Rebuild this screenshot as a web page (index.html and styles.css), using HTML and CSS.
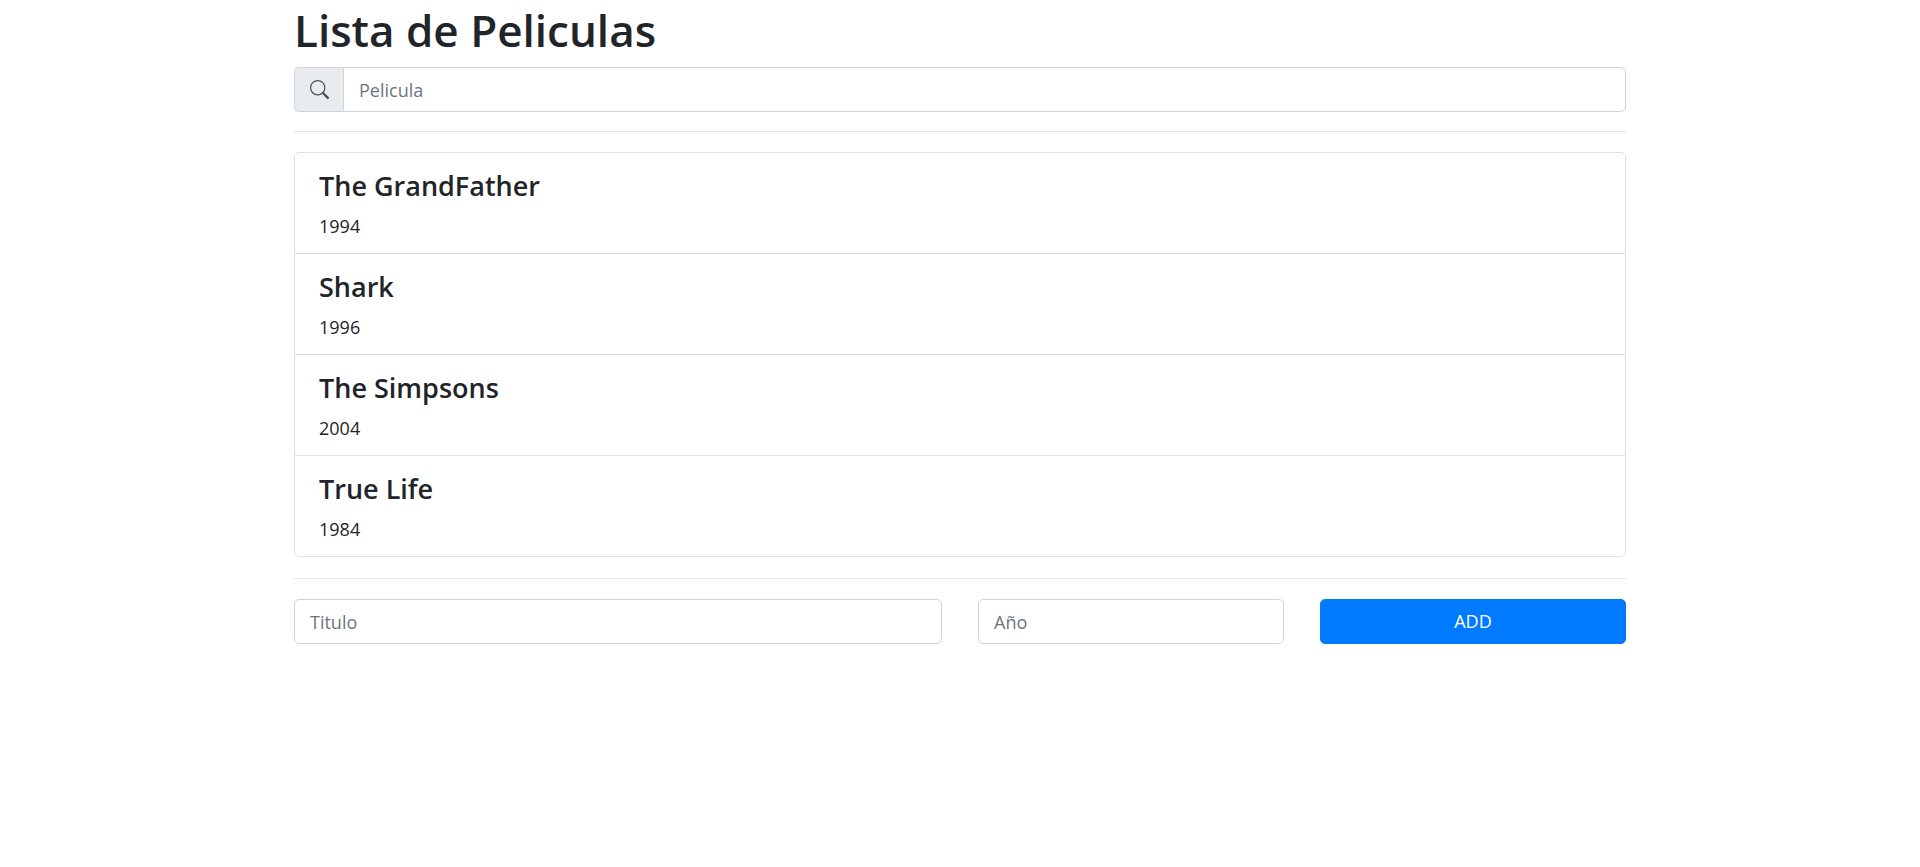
FILE: index.html
```html
<!DOCTYPE html>
<html lang="es">
<head>
<meta charset="utf-8">
<meta name="viewport" content="width=device-width, initial-scale=1">
<title>Lista de Peliculas</title>
<link rel="stylesheet" href="styles.css">
</head>
<body>
<main class="container">
  <h1 class="title">Lista de Peliculas</h1>
  <div class="search">
    <label class="search-icon" for="search" aria-label="Buscar">
      <svg class="icon" viewBox="0 0 16 16" fill="currentColor" aria-hidden="true">
        <path fill-rule="evenodd" d="M10.442 10.442a1 1 0 0 1 1.415 0l3.85 3.85a1 1 0 0 1-1.414 1.415l-3.85-3.85a1 1 0 0 1 0-1.415z"/>
        <path fill-rule="evenodd" d="M6.5 12a5.5 5.5 0 1 0 0-11 5.5 5.5 0 0 0 0 11zM13 6.5a6.5 6.5 0 1 1-13 0 6.5 6.5 0 0 1 13 0z"/>
      </svg>
    </label>
    <input class="field search-field" id="search" type="text" placeholder="Pelicula">
  </div>
  <hr class="rule">
  <ul class="list">
    <li class="item"><h4 class="name">The GrandFather</h4><p class="year">1994</p></li>
    <li class="item"><h4 class="name">Shark</h4><p class="year">1996</p></li>
    <li class="item"><h4 class="name">The Simpsons</h4><p class="year">2004</p></li>
    <li class="item"><h4 class="name">True Life</h4><p class="year">1984</p></li>
  </ul>
  <hr class="rule">
  <form class="form">
    <input class="field wide" type="text" placeholder="Titulo" aria-label="Titulo">
    <input class="field" type="text" placeholder="Año" aria-label="Año">
    <button class="button" type="button">ADD</button>
  </form>
</main>
</body>
</html>
```
FILE: styles.css
```css
*, *::before, *::after { box-sizing: border-box; }

body {
  margin: 0;
  background: #fff;
  color: #212529;
  font-family: "Segoe UI", "Open Sans", "Noto Sans", sans-serif;
  font-size: 18px;
  line-height: 29px;
}

.container {
  max-width: 1368px;
  margin: 0 auto;
  padding: 0 18px;
}

.title {
  margin: 0 0 7px;
  font-size: 44px;
  font-weight: 600;
  line-height: 60px;
}

.search { display: flex; }

.search-icon {
  display: flex;
  align-items: center;
  padding: 0 14px 0 15px;
  border: 1px solid #ced4da;
  border-right: 0;
  border-radius: 5px 0 0 5px;
  background: #e9ecef;
  color: #495057;
}

.icon { display: block; width: 19px; height: 19px; }

.field {
  width: 100%;
  min-width: 0;
  height: 45px;
  padding: 0 15px;
  border: 1px solid #ced4da;
  border-radius: 5px;
  background: #fff;
  color: #495057;
  font: inherit;
}

.field::placeholder { color: #6c757d; opacity: 1; }

.search-field { flex: 1; border-radius: 0 5px 5px 0; }

.rule {
  margin: 19px 0 20px;
  border: 0;
  border-top: 1px solid #e5e5e5;
}

.list {
  margin: 0 0 21px;
  padding: 0;
  list-style: none;
  border: 1px solid #dfdfdf;
  border-radius: 5px;
}

.item { padding: 15px 24px 12px; }
.item + .item { border-top: 1px solid #dfdfdf; }

.name {
  margin: 0 0 9px;
  font-size: 27px;
  font-weight: 600;
  line-height: 35px;
}

.year { margin: 0; }

.form {
  display: grid;
  grid-template-columns: repeat(4, minmax(0, 1fr));
  gap: 36px;
}

.wide { grid-column: span 2; }

.button {
  height: 45px;
  padding: 0 15px;
  border: 1px solid #007bff;
  border-radius: 5px;
  background: #007bff;
  color: #fff;
  font: inherit;
  cursor: pointer;
}
```
